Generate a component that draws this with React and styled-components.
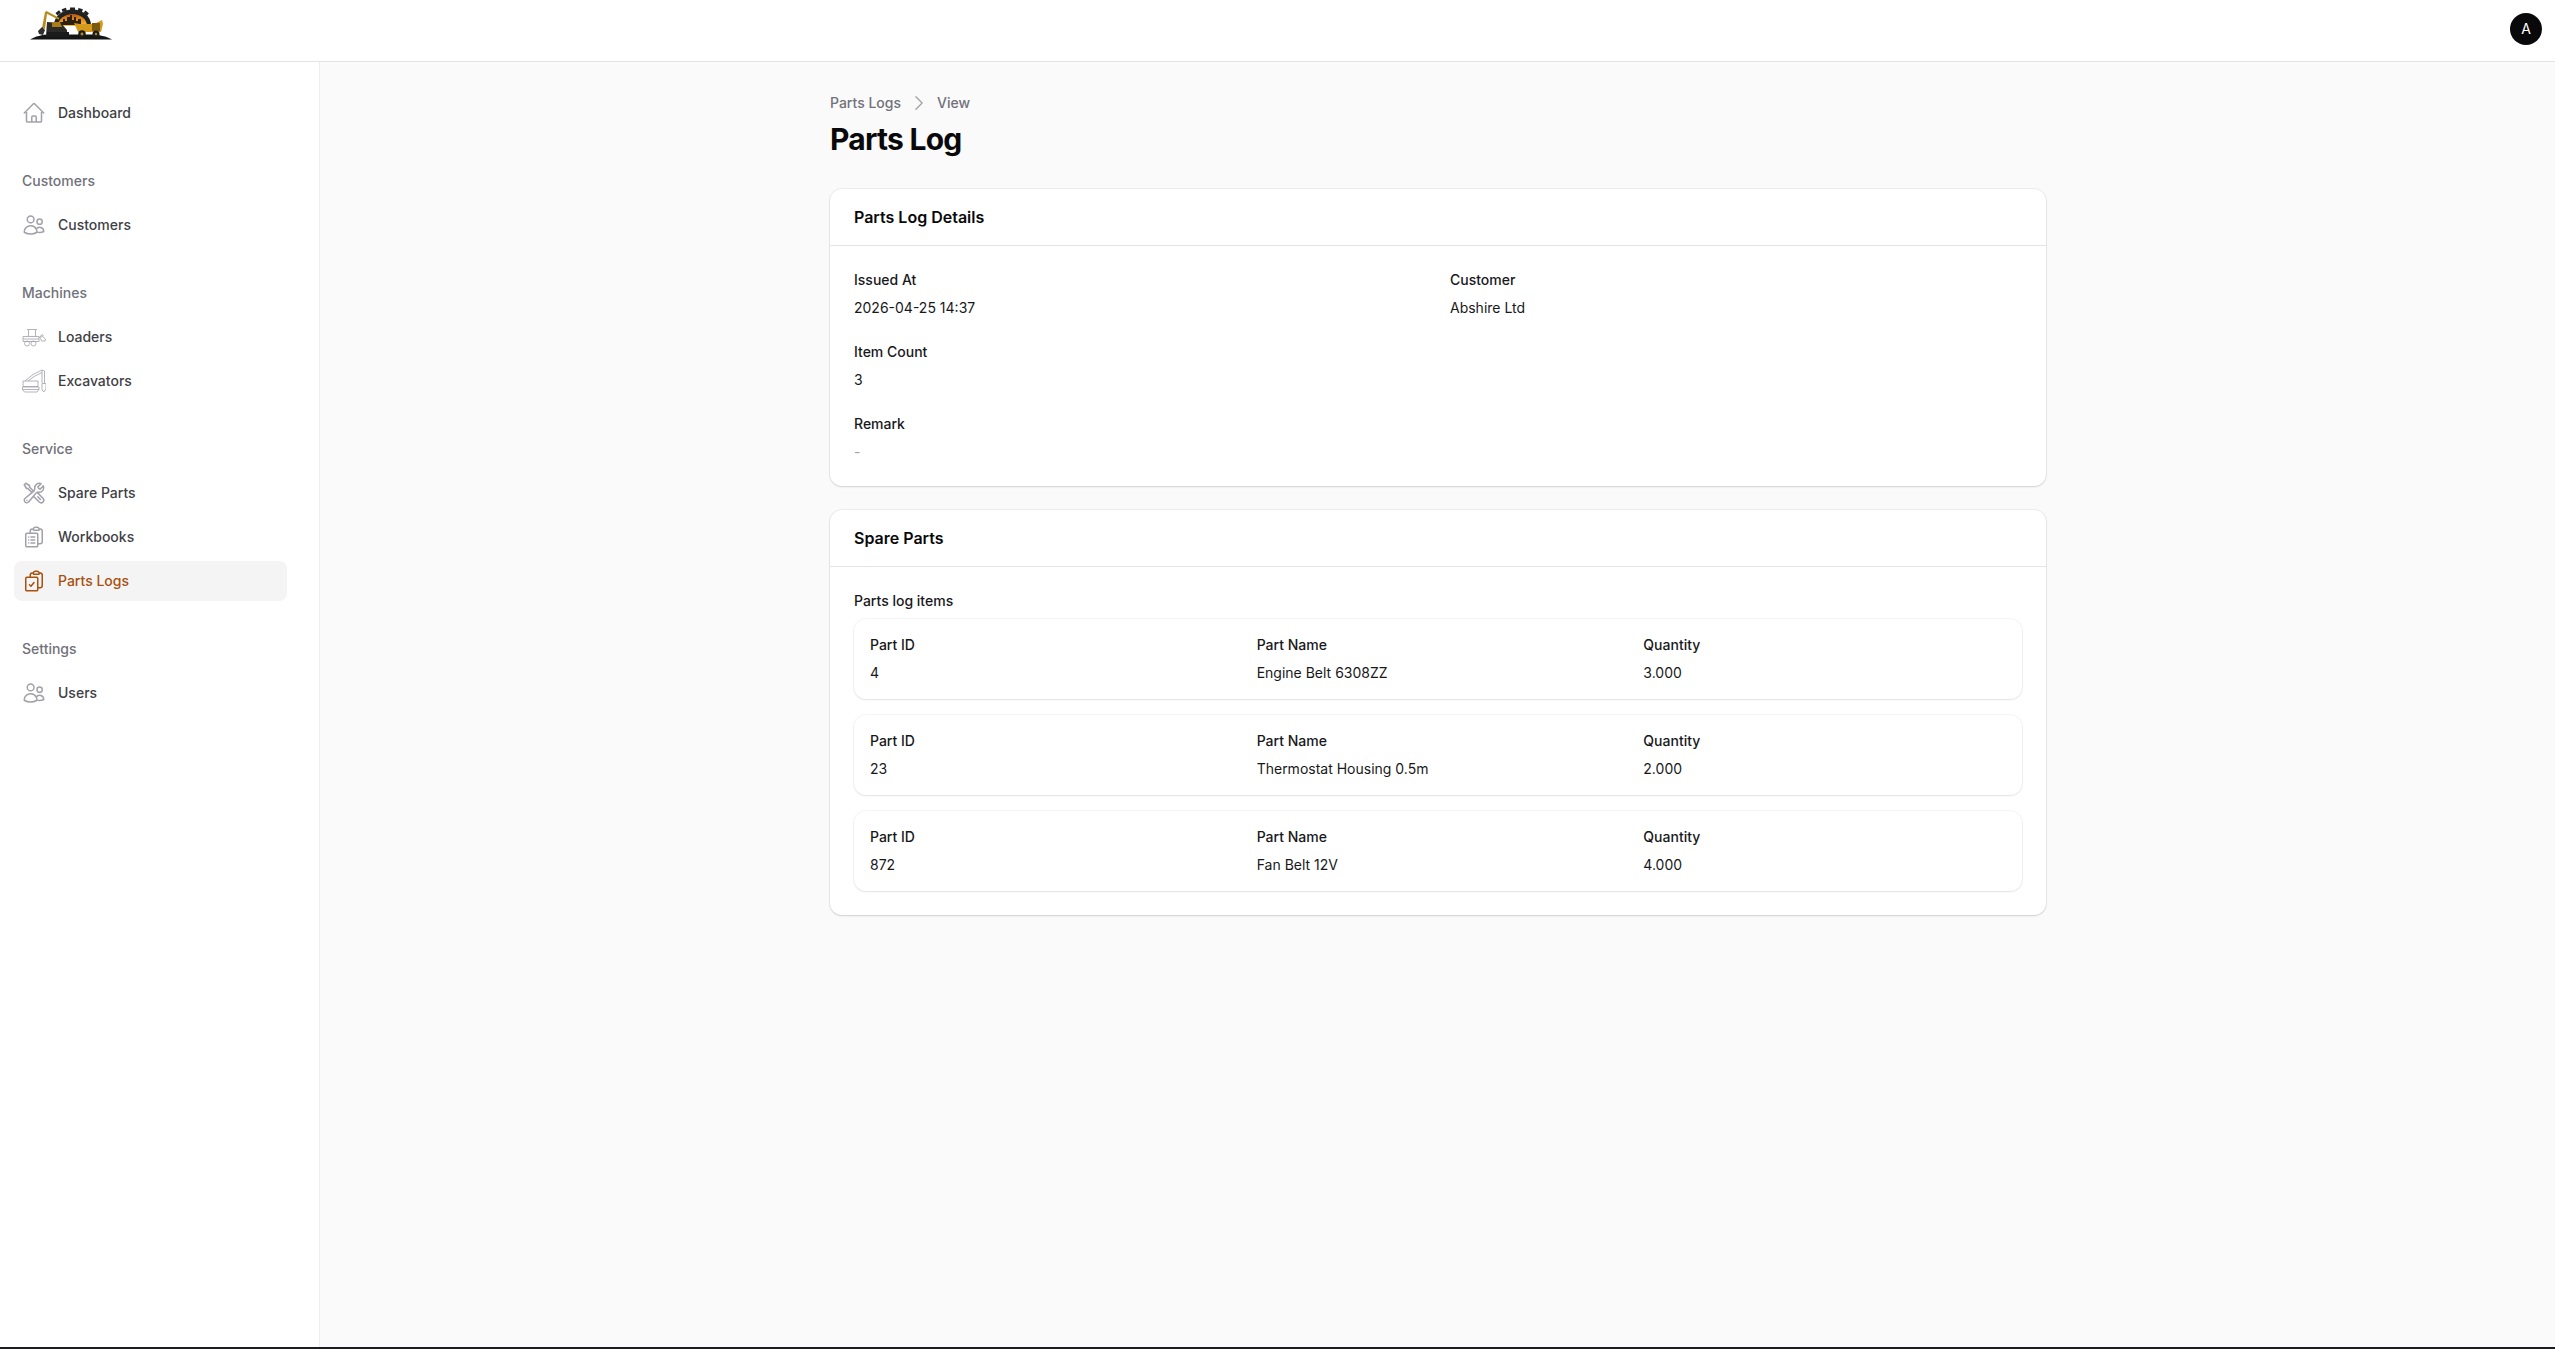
import React from 'react'
import styled, { createGlobalStyle } from 'styled-components'
import {
  HiOutlineHome,
  HiOutlineUsers,
  HiOutlineWrenchScrewdriver,
  HiOutlineClipboardDocumentList,
  HiOutlineClipboardDocumentCheck,
  HiOutlineChevronRight
} from 'react-icons/hi2'

const GlobalStyle = createGlobalStyle`
  * { box-sizing: border-box; }
  html, body { margin: 0; height: 100%; }
  body {
    font-family: Inter, "Noto Sans", sans-serif;
    font-size: 14px;
    line-height: 20px;
    color: #09090b;
    background: #fafafa;
  }
`

const Page = styled.div`
  display: flex;
  flex-direction: column;
  height: 1349px;
  overflow: hidden;
`

const Topbar = styled.header`
  flex: none;
  height: 62px;
  display: flex;
  justify-content: space-between;
  align-items: flex-start;
  padding: 7px 13px 0 30px;
  background: #fff;
  border-bottom: 1px solid #e4e4e7;
`

const Avatar = styled.div`
  width: 32px;
  height: 32px;
  margin-top: 6px;
  border-radius: 50%;
  background: #09090b;
  color: #fff;
  font-size: 14px;
  font-weight: 400;
  display: flex;
  align-items: center;
  justify-content: center;
`

const Body = styled.div`
  flex: 1;
  min-height: 0;
  display: flex;
`

const Sidebar = styled.aside`
  flex: none;
  width: 320px;
  background: #fff;
  border-right: 1px solid #eeeeef;
  padding: 31px 32px 0 14px;
  display: flex;
  flex-direction: column;
  gap: 28px;
`

const NavGroup = styled.div`
  display: flex;
  flex-direction: column;
  gap: 4px;
`

const GroupLabel = styled.div`
  padding: 10px 8px;
  height: 40px;
  font-weight: 500;
  color: #71717a;
`

const NavItem = styled.a`
  height: 40px;
  padding: 8px;
  display: flex;
  align-items: center;
  gap: 12px;
  border-radius: 8px;
  font-weight: 500;
  color: ${p => (p.$active ? '#a8500f' : '#3f3f46')};
  background: ${p => (p.$active ? '#f4f4f5' : 'transparent')};
  & svg {
    flex: none;
    width: 24px;
    height: 24px;
    color: ${p => (p.$active ? '#a8500f' : '#a1a1aa')};
  }
`

const Main = styled.main`
  flex: 1;
  min-width: 0;
  padding: 31px 32px 0 33px;
  display: flex;
  justify-content: center;
`

const Content = styled.div`
  width: 1216px;
  display: flex;
  flex-direction: column;
`

const Breadcrumbs = styled.nav`
  display: flex;
  align-items: center;
  gap: 8px;
  font-weight: 500;
  color: #71717a;
  & svg {
    width: 20px;
    height: 20px;
    color: #a1a1aa;
  }
`

const Heading = styled.h1`
  margin: 8px 0 32px;
  font-size: 30px;
  line-height: 36px;
  font-weight: 700;
  letter-spacing: -0.75px;
  color: #09090b;
`

const Stack = styled.div`
  display: flex;
  flex-direction: column;
  gap: 24px;
`

const Card = styled.section`
  background: #fff;
  border-radius: 12px;
  box-shadow: 0 0 0 1px rgba(9, 9, 11, 0.05), 0 1px 2px rgba(0, 0, 0, 0.12);
`

const CardTitle = styled.h2`
  margin: 0;
  padding: 0 24px;
  height: 57px;
  display: flex;
  align-items: center;
  font-size: 16px;
  line-height: 24px;
  font-weight: 600;
  color: #09090b;
  border-bottom: 1px solid #e4e4e7;
`

const CardBody = styled.div`
  padding: 24px;
`

const DetailsGrid = styled.div`
  display: grid;
  grid-template-columns: repeat(2, 1fr);
  gap: 24px;
`

const Field = styled.div`
  display: flex;
  flex-direction: column;
  gap: 8px;
`

const Label = styled.div`
  font-weight: 500;
  color: #18181b;
`

const Value = styled.div`
  color: ${p => (p.$muted ? '#a1a1aa' : '#18181b')};
`

const ItemList = styled.div`
  margin-top: 8px;
  display: flex;
  flex-direction: column;
  gap: 16px;
`

const ItemCard = styled.div`
  padding: 16px;
  display: grid;
  grid-template-columns: repeat(3, 1fr);
  gap: 24px;
  height: 80px;
  background: #fff;
  border-radius: 12px;
  box-shadow: 0 0 0 1px rgba(9, 9, 11, 0.04), 0 1px 2px rgba(0, 0, 0, 0.08);
`

const BottomLine = styled.div`
  flex: none;
  height: 2px;
  background: #1c1c20;
`

const Logo = () => (
  <svg width="82" height="33" viewBox="0 0 82 33" aria-label="logo">
    <defs>
      <linearGradient id="sky" x1="0" y1="0" x2="0" y2="1">
        <stop offset="0" stopColor="#b85a0e" />
        <stop offset="0.55" stopColor="#e8941c" />
        <stop offset="1" stopColor="#f3c23a" />
      </linearGradient>
    </defs>
    <g fill="#222">
      <path d="M24 18a18 15 0 0 1 37 0z" />
      <rect x="40" y="0.500" width="5" height="3" />
      <rect x="32" y="1.500" width="4.500" height="3" transform="rotate(-18 34 3)" />
      <rect x="48" y="1.500" width="4.500" height="3" transform="rotate(18 50 3)" />
      <rect x="26" y="4.500" width="4.500" height="3" transform="rotate(-38 28 6)" />
      <rect x="54" y="4.500" width="4.500" height="3" transform="rotate(38 56 6)" />
    </g>
    <path d="M28 19a14.500 12 0 0 1 29 0z" fill="url(#sky)" />
    <path d="M30 18v-3h3v-3h2v2h2v-4h3v-2h2v5h2v-3h2v4h2v-2h3v6z" fill="#2b2013" />
    <path d="M0 32.500c5-3 12-5 20-5h40c9 0 17 2 22 5z" fill="#151515" />
    <path d="M12 21l3-16 1.500-1 13 7-1 1.800-11.500-6L15 22z" fill="#b98a1e" />
    <path d="M12 20l3 3-2 5-4-1-1-3z" fill="#2f2f2f" />
    <path d="M17 15l14 1 6 7v6H16z" fill="#2c2a26" />
    <path d="M22 15h8l2 5H22z" fill="#a87c1a" />
    <path d="M17 25h22v5H17z" fill="#1b1b1b" />
    <path d="M44 16l6 1h14l8-4 1 4-2 8H48z" fill="#d39a1e" />
    <path d="M62 16h8v8h-8z" fill="#7b5a10" />
    <circle cx="52" cy="27" r="3.800" fill="#1b1b1b" />
    <circle cx="52" cy="27" r="1.400" fill="#b98a1e" />
    <circle cx="66" cy="27" r="3.500" fill="#1b1b1b" />
    <circle cx="66" cy="27" r="1.200" fill="#b98a1e" />
  </svg>
)

const LoaderIcon = () => (
  <svg viewBox="0 0 24 24" fill="none" stroke="currentColor" strokeWidth="0.8">
    <path d="M5 4.500h10M6.500 4.500v7M13.500 4.500v7" />
    <path d="M1 11.500h16v5H1zM1 14h16" />
    <path d="M17 13l3-3.500 1.500 1" />
    <path d="M19.500 10.500l4 3.500-.5 2h-3.500l-1-2.500z" />
    <circle cx="5" cy="18.500" r="2.500" />
    <circle cx="11.500" cy="18.500" r="2.500" />
  </svg>
)

const ExcavatorIcon = () => (
  <svg viewBox="0 0 24 24" fill="none" stroke="currentColor" strokeWidth="0.8">
    <path d="M3 12l8-6.500 9-4.500" />
    <path d="M6 12l6-4.500 8-4" />
    <path d="M20 1l2.500 1v12M20 1v13" />
    <path d="M1 12h15v5.500H1z" />
    <path d="M0.500 18h16.500v2.500L15 23H2.500L.5 20.500zM.5 20.500h16.500" />
    <path d="M20 14.500h4v5l-2 3.500-2-2z" />
  </svg>
)

const nav = [
  { items: [{ label: 'Dashboard', icon: <HiOutlineHome /> }] },
  { title: 'Customers', items: [{ label: 'Customers', icon: <HiOutlineUsers /> }] },
  {
    title: 'Machines',
    items: [
      { label: 'Loaders', icon: <LoaderIcon /> },
      { label: 'Excavators', icon: <ExcavatorIcon /> }
    ]
  },
  {
    title: 'Service',
    items: [
      { label: 'Spare Parts', icon: <HiOutlineWrenchScrewdriver /> },
      { label: 'Workbooks', icon: <HiOutlineClipboardDocumentList /> },
      { label: 'Parts Logs', icon: <HiOutlineClipboardDocumentCheck />, active: true }
    ]
  },
  { title: 'Settings', items: [{ label: 'Users', icon: <HiOutlineUsers /> }] }
]

const parts = [
  { id: '4', name: 'Engine Belt 6308ZZ', qty: '3.000' },
  { id: '23', name: 'Thermostat Housing 0.5m', qty: '2.000' },
  { id: '872', name: 'Fan Belt 12V', qty: '4.000' }
]

const App = () => (
  <Page>
    <GlobalStyle />
    <Topbar>
      <Logo />
      <Avatar>A</Avatar>
    </Topbar>
    <Body>
      <Sidebar>
        {nav.map((group, i) => (
          <NavGroup key={i}>
            {group.title && <GroupLabel>{group.title}</GroupLabel>}
            {group.items.map(item => (
              <NavItem key={item.label} $active={item.active}>
                {item.icon}
                <span>{item.label}</span>
              </NavItem>
            ))}
          </NavGroup>
        ))}
      </Sidebar>
      <Main>
        <Content>
          <Breadcrumbs>
            <span>Parts Logs</span>
            <HiOutlineChevronRight />
            <span>View</span>
          </Breadcrumbs>
          <Heading>Parts Log</Heading>
          <Stack>
            <Card>
              <CardTitle>Parts Log Details</CardTitle>
              <CardBody>
                <DetailsGrid>
                  <Field>
                    <Label>Issued At</Label>
                    <Value>2026-04-25 14:37</Value>
                  </Field>
                  <Field>
                    <Label>Customer</Label>
                    <Value>Abshire Ltd</Value>
                  </Field>
                  <Field>
                    <Label>Item Count</Label>
                    <Value>3</Value>
                  </Field>
                  <div />
                  <Field>
                    <Label>Remark</Label>
                    <Value $muted>-</Value>
                  </Field>
                </DetailsGrid>
              </CardBody>
            </Card>
            <Card>
              <CardTitle>Spare Parts</CardTitle>
              <CardBody>
                <Label>Parts log items</Label>
                <ItemList>
                  {parts.map(part => (
                    <ItemCard key={part.id}>
                      <Field>
                        <Label>Part ID</Label>
                        <Value>{part.id}</Value>
                      </Field>
                      <Field>
                        <Label>Part Name</Label>
                        <Value>{part.name}</Value>
                      </Field>
                      <Field>
                        <Label>Quantity</Label>
                        <Value>{part.qty}</Value>
                      </Field>
                    </ItemCard>
                  ))}
                </ItemList>
              </CardBody>
            </Card>
          </Stack>
        </Content>
      </Main>
    </Body>
    <BottomLine />
  </Page>
)

export default App
